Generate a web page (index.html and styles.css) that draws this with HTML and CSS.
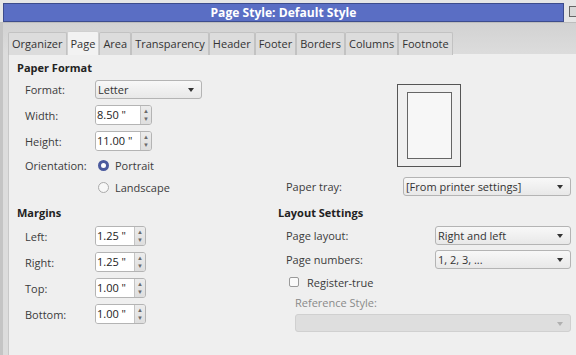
FILE: index.html
```html
<!DOCTYPE html>
<html lang="en">
  <head>
    <meta charset="UTF-8" />
    <title>Page Style: Default Style</title>
    <link rel="stylesheet" href="styles.css">
  </head>
  <body>
    <div class="titlebar">
      <div class="title"><span>Page Style: Default Style</span></div>
      <div class="corner"><span class="corner-icon"></span></div>
    </div>

    <div class="dialog">
      <ul class="tabs">
        <li>Organizer</li>
        <li class="active">Page</li>
        <li>Area</li>
        <li>Transparency</li>
        <li>Header</li>
        <li>Footer</li>
        <li>Borders</li>
        <li>Columns</li>
        <li>Footnote</li>
      </ul>

      <div class="panel">
        <!-- paper format -->
        <div class="section">
          <h2>Paper Format</h2>
          <div class="row">
            <span class="label">Format:</span>
            <div class="select w-format">Letter<i class="caret"></i></div>
          </div>
          <div class="row">
            <span class="label">Width:</span>
            <div class="spin w-size"><span class="field">8.50 "</span><span class="arrows"><b>&#9650;</b><b>&#9660;</b></span></div>
          </div>
          <div class="row">
            <span class="label">Height:</span>
            <div class="spin w-size"><span class="field">11.00 "</span><span class="arrows"><b>&#9650;</b><b>&#9660;</b></span></div>
          </div>
          <div class="row short">
            <span class="label">Orientation:</span>
            <span class="radio checked"></span>Portrait
          </div>
          <div class="row short">
            <span class="label"></span>
            <span class="radio"></span>Landscape
          </div>
        </div>

        <div class="section preview-side">
          <div class="preview"><div class="preview-inner"></div></div>
          <div class="row tray">
            <span class="label">Paper tray:</span>
            <div class="select w-tray">[From printer settings]<i class="caret"></i></div>
          </div>
        </div>

        <!-- margins -->
        <div class="section">
          <h2 class="lower">Margins</h2>
          <div class="row">
            <span class="label">Left:</span>
            <div class="spin w-margin"><span class="field">1.25 "</span><span class="arrows"><b>&#9650;</b><b>&#9660;</b></span></div>
          </div>
          <div class="row">
            <span class="label">Right:</span>
            <div class="spin w-margin"><span class="field">1.25 "</span><span class="arrows"><b>&#9650;</b><b>&#9660;</b></span></div>
          </div>
          <div class="row">
            <span class="label">Top:</span>
            <div class="spin w-margin"><span class="field">1.00 "</span><span class="arrows"><b>&#9650;</b><b>&#9660;</b></span></div>
          </div>
          <div class="row">
            <span class="label">Bottom:</span>
            <div class="spin w-margin"><span class="field">1.00 "</span><span class="arrows"><b>&#9650;</b><b>&#9660;</b></span></div>
          </div>
        </div>

        <!-- layout settings -->
        <div class="section layout">
          <h2 class="lower">Layout Settings</h2>
          <div class="row mid">
            <span class="label wide">Page layout:</span>
            <div class="select w-layout">Right and left<i class="caret"></i></div>
          </div>
          <div class="row mid">
            <span class="label wide">Page numbers:</span>
            <div class="select w-layout">1, 2, 3, ...<i class="caret"></i></div>
          </div>
          <div class="row check-row">
            <span class="checkbox"></span>Register-true
          </div>
          <div class="ref-label">Reference Style:</div>
          <div class="select disabled"><i class="caret"></i></div>
        </div>
      </div>
    </div>
  </body>
</html>
```

FILE: styles.css
```css
html,
body,
ul,
li,
h2 {
  margin: 0;
  padding: 0;
}

ul {
  list-style: none;
}

body {
  width: 576px;
  height: 355px;
  overflow: hidden;
  background-color: #dcdcdc;
  font-family: "Open Sans", "Noto Sans", sans-serif;
  font-size: 11px;
  color: #3b3b3b;
}

/* Title bar */
.titlebar {
  display: flex;
  height: 22px;
  background-color: #e6e6e6;
}

.title {
  width: 562px;
  height: 17px;
  margin: 3px 0 0 3px;
  background-color: #5a6ec4;
  border: 1px solid #3d4c8c;
  color: #fff;
  font-weight: 700;
  font-size: 13px;
  line-height: 17px;
  text-align: center;
}

.title span {
  display: inline-block;
  transform: scaleX(0.93);
}

.corner {
  flex: 1;
  padding: 6px 0 0 5px;
}

.corner-icon {
  display: block;
  width: 6px;
  height: 9px;
  border: 1px solid #666;
  border-right: 0;
  background-color: #d8d8d8;
}

/* Dialog */
.dialog {
  height: 333px;
  border-left: 3px solid #c4c4c4;
  border-top: 1px solid #bdbdbd;
  background: linear-gradient(#d2d2d2, #dcdcdc 30px);
}

.tabs {
  display: flex;
  padding: 8px 0 0 5px;
  height: 23px;
}

.tabs li {
  height: 22px;
  margin-top: 1px;
  padding: 0 3px;
  line-height: 21px;
  background-color: #dcdcdc;
  border: 1px solid #c2c2c2;
  border-bottom: 0;
  border-radius: 2px 2px 0 0;
  color: #333;
  white-space: nowrap;
}

.tabs li.active {
  height: 23px;
  margin-top: 0;
  line-height: 23px;
  background-color: #f2f2f2;
  border-color: #d0d0d0;
}

.panel {
  display: grid;
  grid-template-columns: 261px 1fr;
  align-content: start;
  height: 301px;
  margin-left: 5px;
  padding: 6px 6px 0 8px;
  background-color: #efefef;
  border-left: 1px solid #c8c8c8;
}

h2 {
  height: 16px;
  line-height: 16px;
  font-size: 11px;
  font-weight: 700;
  color: #222;
}

h2.lower {
  margin-top: 7px;
  margin-bottom: 2px;
}

.row {
  display: flex;
  align-items: center;
  height: 26px;
  padding-left: 8px;
}

.row.short {
  height: 22px;
}

.row.mid {
  height: 24px;
}

.label {
  width: 70px;
  flex: none;
}

.label.wide {
  width: 149px;
}

/* Dropdowns */
.select {
  position: relative;
  box-sizing: border-box;
  height: 19px;
  padding-left: 2px;
  line-height: 17px;
  background: linear-gradient(#f8f8f8, #e8e8e8);
  border: 1px solid #b4b4b4;
  border-radius: 3px;
  color: #333;
}

.caret {
  position: absolute;
  right: 7px;
  top: 7px;
  width: 0;
  height: 0;
  border-left: 3px solid transparent;
  border-right: 3px solid transparent;
  border-top: 4px solid #333;
}

.w-format {
  width: 107px;
}

.w-tray {
  width: 168px;
}

.w-layout {
  width: 136px;
}

.select.disabled {
  width: 276px;
  height: 18px;
  margin: 1px 0 0 17px;
  background: #dedede;
  border-color: #d0d0d0;
}

.select.disabled .caret {
  border-top-color: #b0b0b0;
}

/* Spin fields */
.spin {
  display: flex;
  box-sizing: border-box;
  height: 20px;
  border: 1px solid #b4b4b4;
  border-radius: 3px;
  overflow: hidden;
}

.spin .field {
  flex: 1;
  background-color: #fff;
  line-height: 18px;
  padding-left: 1px;
  color: #222;
}

.spin .arrows {
  display: flex;
  flex-direction: column;
  justify-content: center;
  width: 10px;
  background: linear-gradient(#ececec, #dedede);
  border-left: 1px solid #c4c4c4;
  text-align: center;
}

.spin .arrows b {
  display: block;
  font-size: 6px;
  line-height: 8px;
  font-weight: 400;
  color: #6a6a6a;
}

.w-size {
  width: 57px;
}

.w-margin {
  width: 51px;
}

/* Radio and checkbox */
.radio {
  box-sizing: border-box;
  width: 11px;
  height: 11px;
  margin: 0 6px 0 3px;
  border: 1px solid #aaa;
  border-radius: 50%;
  background-color: #f7f7f7;
}

.radio.checked {
  border: 3px solid #4b5a9e;
  background-color: #fff;
}

.checkbox {
  box-sizing: border-box;
  width: 10px;
  height: 10px;
  margin: 0 8px 0 3px;
  border: 1px solid #9a9a9a;
  border-radius: 2px;
  background-color: #fafafa;
}

.check-row {
  height: 22px;
}

.ref-label {
  height: 20px;
  line-height: 20px;
  padding-left: 17px;
  color: #8a8a8a;
}

/* Page preview */
.preview {
  box-sizing: border-box;
  width: 64px;
  height: 83px;
  margin: 24px 0 0 119px;
  padding: 7px 0 0 9px;
  border: 1px solid #555;
  background-color: #f0f0f0;
}

.preview-inner {
  box-sizing: border-box;
  width: 45px;
  height: 67px;
  border: 1px solid #666;
  background-color: #f7f7f7;
}

.row.tray {
  height: 20px;
  margin-top: 9px;
}

.tray .label {
  width: 117px;
}
```
